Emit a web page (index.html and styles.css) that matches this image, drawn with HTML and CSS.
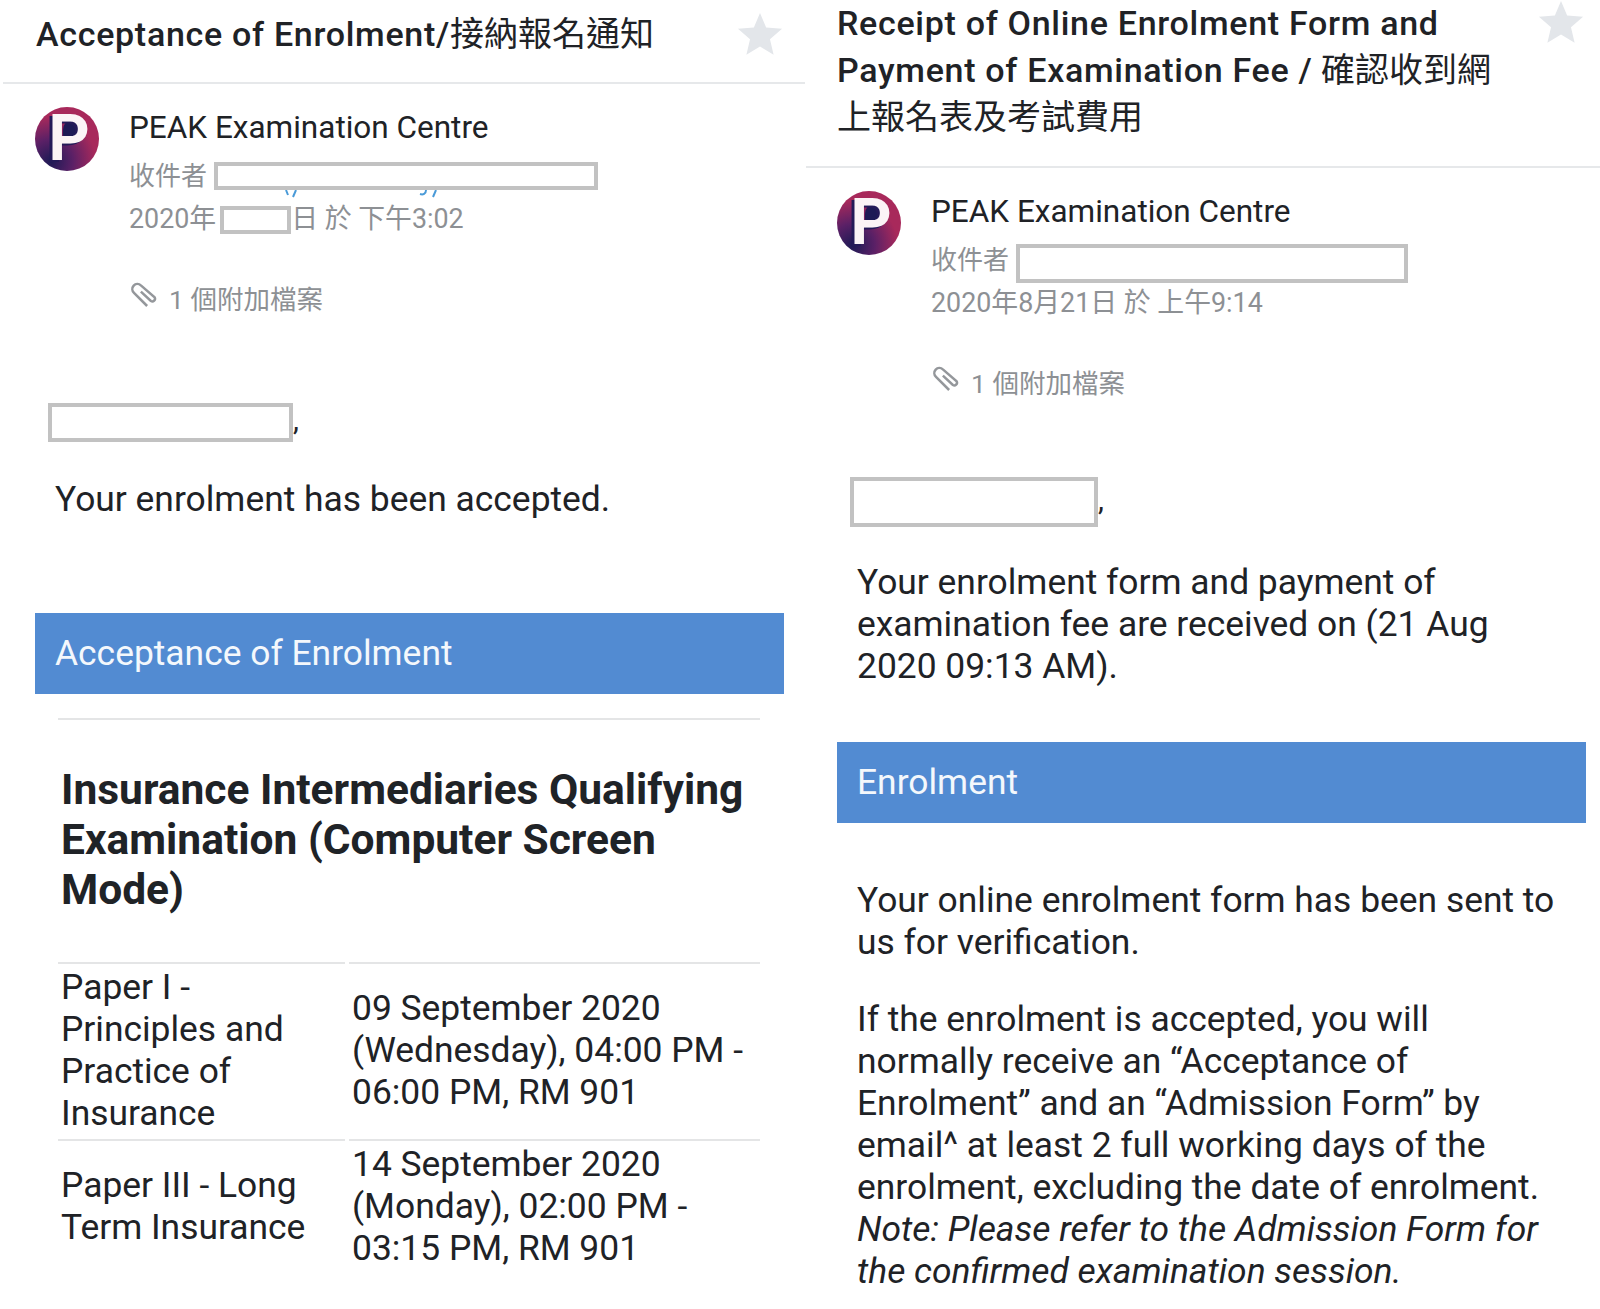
FILE: index.html
```html
<!DOCTYPE html>
<html lang="en">
<head>
    <meta charset="UTF-8">
    <meta name="viewport" content="width=device-width, initial-scale=1.0">
    <title>Enrolment emails</title>
    <link rel="stylesheet" href="styles.css">
</head>
<body>
    <div class="page">
        <section class="mail mail-accept">
            <header class="mail-head">
                <h1 class="subject"><span class="wide">Acceptance of Enrolment/</span><span class="cjk">接納報名通知</span></h1>
                <svg class="star" viewBox="0 0 24 24"><path d="M12 1l3.2 7.6 8.3.7-6.3 5.4 1.9 8.1L12 18.5 4.900 22.800l1.900-8.100L.5 9.300l8.300-.7z"/></svg>
            </header>
            <div class="sender">
                <div class="avatar"><span class="avatar-p">P</span></div>
                <div class="sender-info">
                    <div class="sender-name">PEAK Examination Centre</div>
                    <div class="meta meta-to"><span class="to-label">收件者</span> <span class="redact redact-to">
                        <svg class="link-bits" viewBox="0 0 376 8"><path d="M68 0l2 5M78 0l-3 7M208 0c0 4-3 5-6 4M218 0l-3 7"/></svg>
                    </span></div>
                    <div class="meta">2020年<span class="redact redact-date"></span>日 於 下午3:02</div>
                    <div class="meta attach">
                        <svg class="clip" viewBox="0 0 24 24"><path d="M9.500 8.500L17.500 16A2.200 2.200 0 0 0 20.500 13L9.500 3.500A4 4 0 0 0 4 9.500L14.500 20"/></svg>
                        1 個附加檔案
                    </div>
                </div>
            </div>
            <div class="greeting greeting-accept"><span class="redact redact-name"></span>,</div>
            <p class="body-text text-accepted">Your enrolment has been accepted.</p>
            <div class="banner banner-accept">Acceptance of Enrolment</div>
            <hr class="rule">
            <h2 class="exam-title">Insurance Intermediaries Qualifying Examination (Computer Screen Mode)</h2>
            <div class="papers">
                <div class="paper-cell">Paper I -<br>Principles and<br>Practice of<br>Insurance</div>
                <div class="paper-cell paper-date">09 September 2020<br>(Wednesday), 04:00 PM -<br>06:00 PM, RM 901</div>
                <div class="paper-cell">Paper III - Long<br>Term Insurance</div>
                <div class="paper-cell paper-date">14 September 2020<br>(Monday), 02:00 PM -<br>03:15 PM, RM 901</div>
            </div>
        </section>

        <section class="mail mail-receipt">
            <header class="mail-head">
                <h1 class="subject"><span class="wide">Receipt of Online Enrolment Form and<br>Payment of Examination Fee /</span> <span class="cjk">確認收到網<br>上報名表及考試費用</span></h1>
                <svg class="star" viewBox="0 0 24 24"><path d="M12 1l3.2 7.6 8.3.7-6.3 5.4 1.9 8.1L12 18.5 4.900 22.800l1.900-8.100L.5 9.300l8.300-.7z"/></svg>
            </header>
            <div class="sender">
                <div class="avatar"><span class="avatar-p">P</span></div>
                <div class="sender-info">
                    <div class="sender-name">PEAK Examination Centre</div>
                    <div class="meta meta-to"><span class="to-label">收件者</span> <span class="redact redact-to-wide"></span></div>
                    <div class="meta">2020年8月21日 於 上午9:14</div>
                    <div class="meta attach">
                        <svg class="clip" viewBox="0 0 24 24"><path d="M9.500 8.500L17.500 16A2.200 2.200 0 0 0 20.500 13L9.500 3.500A4 4 0 0 0 4 9.500L14.500 20"/></svg>
                        1 個附加檔案
                    </div>
                </div>
            </div>
            <div class="greeting greeting-receipt"><span class="redact redact-name-wide"></span>,</div>
            <p class="body-text text-received">Your enrolment form and payment of<br>examination fee are received on (21 Aug<br>2020 09:13 AM).</p>
            <div class="banner banner-receipt">Enrolment</div>
            <p class="body-text text-sent">Your online enrolment form has been sent to<br>us for verification.</p>
            <p class="body-text text-normally">If the enrolment is accepted, you will<br>normally receive an “Acceptance of<br>Enrolment” and an “Admission Form” by<br>email^ at least 2 full working days of the<br>enrolment, excluding the date of enrolment.<br><em>Note: Please refer to the Admission Form for<br>the confirmed examination session.</em></p>
        </section>
    </div>
</body>
</html>
```

FILE: styles.css
```css
html, body {
    margin: 0;
    padding: 0;
    background: #fff;
}
body {
    font-family: Roboto, "Noto Sans CJK TC", sans-serif;
    color: #1d1f22;
    overflow: hidden;
}
.page {
    display: grid;
    grid-template-columns: 805px 795px;
    height: 1309px;
    overflow: hidden;
}
.mail {
    min-width: 0;
}

/* subject row */
.mail-head {
    display: flex;
    justify-content: space-between;
    align-items: flex-start;
    border-bottom: 2px solid #e6e8ea;
    padding-bottom: 25px;
}
.mail-accept .mail-head {
    margin-left: 3px;
    padding-top: 11px;
    padding-bottom: 24px;
    padding-left: 33px;
    padding-right: 22px;
}
.mail-receipt .mail-head {
    margin-left: 1px;
    padding-left: 31px;
    padding-right: 16px;
}
.subject {
    margin: 0;
    font-size: 34px;
    line-height: 47px;
    font-weight: 500;
    color: #202226;
}
.subject .wide {
    letter-spacing: 0.7px;
}
.cjk {
    font-weight: 400;
}
.star {
    width: 46px;
    height: 46px;
    fill: #e3e6ea;
    flex: none;
}
.mail-accept .star {
    margin-top: 0;
}
.mail-receipt .star {
    margin-top: -1px;
}

/* sender block */
.sender {
    display: flex;
    gap: 30px;
    padding: 22px 0 0 35px;
}
.mail-receipt .sender {
    padding-left: 32px;
}
.avatar {
    position: relative;
    width: 64px;
    height: 64px;
    margin-top: 1px;
    border-radius: 50%;
    flex: none;
    display: flex;
    align-items: center;
    justify-content: center;
    background:
        radial-gradient(circle at 25% 85%, #1d1a55 0, #5a2066 30%, rgba(90, 32, 100, 0) 62%),
        #a8295b;
}
.avatar::before {
    content: "";
    position: absolute;
    left: 28px;
    top: 14px;
    width: 18px;
    height: 22px;
    border-radius: 40%;
    background: #1d1a55;
}
.avatar-p {
    position: relative;
    margin-left: 4px;
    font-size: 64px;
    line-height: 64px;
    font-weight: 700;
    color: #fbf4f6;
    text-shadow: -3px 2px 0 #241a58;
}
.sender-name {
    font-size: 31.5px;
    line-height: 44px;
    color: #202226;
}
.meta {
    font-size: 26.85px;
    line-height: 44px;
    color: #8d9094;
}
.meta-to {
    height: 43px;
    margin-top: 4px;
}
.to-label {
    font-size: 26px;
}
.attach {
    margin-top: 37px;
    display: flex;
    align-items: center;
    gap: 10px;
    font-size: 26.5px;
}
.clip {
    width: 30px;
    height: 30px;
    margin-top: -9px;
    fill: none;
    stroke: #94979b;
    stroke-width: 2;
}

/* grey redaction frames */
.redact {
    display: inline-block;
    box-sizing: border-box;
    border: 4px solid #c2c2c2;
    background: #fff;
    vertical-align: middle;
    position: relative;
}
.redact-to {
    width: 384px;
    height: 28px;
    margin-top: -4px;
}
.link-bits {
    position: absolute;
    left: 0;
    top: 24px;
    width: 376px;
    height: 8px;
    fill: none;
    stroke: #4a9bd8;
    stroke-width: 2;
}
.redact-to-wide {
    width: 392px;
    height: 39px;
    margin-top: 4px;
}
.redact-date {
    width: 71px;
    height: 28px;
    margin-top: -2px;
    margin-left: 4px;
}
.redact-name {
    width: 245px;
    height: 39px;
}
.redact-name-wide {
    width: 248px;
    height: 50px;
}

/* message body */
.greeting {
    font-size: 30px;
    color: #202226;
}
.greeting-accept {
    margin: 78px 0 0 48px;
    height: 39px;
    line-height: 39px;
}
.greeting-receipt {
    margin: 69px 0 0 45px;
    height: 50px;
    line-height: 50px;
}
.body-text {
    margin: 0;
    font-size: 35.4px;
    line-height: 42px;
    color: #202226;
}
.text-accepted {
    margin: 39px 0 0 55px;
}
.text-received {
    margin: 36px 0 0 52px;
}
.text-sent {
    margin: 56px 0 0 52px;
}
.text-normally {
    margin: 35px 0 0 52px;
}
.banner {
    height: 81px;
    line-height: 81px;
    padding-left: 20px;
    font-size: 35.4px;
    color: #f4f8fc;
    background: #528bd2;
    width: 729px;
}
.banner-accept {
    margin: 93px 0 0 35px;
}
.banner-receipt {
    margin: 55px 0 0 32px;
}
.rule {
    height: 2px;
    border: 0;
    margin: 24px 0 0 58px;
    width: 702px;
    background: #e4e5e6;
}

/* exam details */
.exam-title {
    margin: 45px 0 0 61px;
    width: 700px;
    font-size: 42.5px;
    line-height: 50px;
    font-weight: 700;
    color: #1f2327;
}
.papers {
    display: grid;
    grid-template-columns: 287px 411px;
    column-gap: 4px;
    margin: 47px 0 0 58px;
    font-size: 35.4px;
    line-height: 42px;
    color: #202226;
}
.paper-cell {
    border-top: 2px solid #e4e5e6;
    padding: 2px 3px 5px;
    display: flex;
    align-items: center;
}
```
